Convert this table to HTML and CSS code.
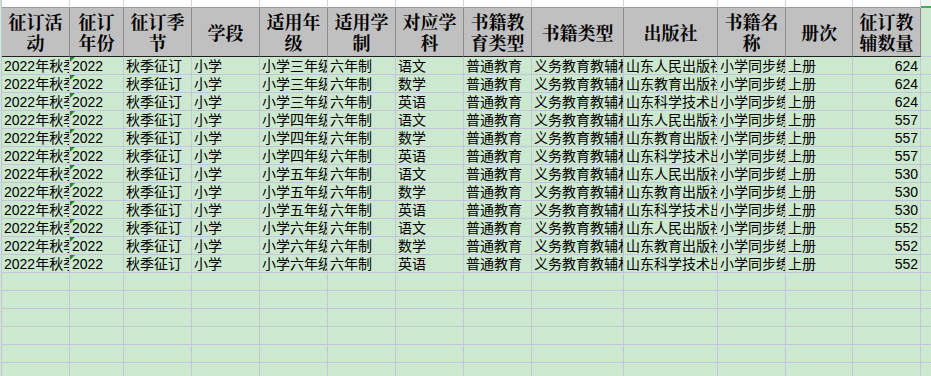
FILE: index.html
```html
<!DOCTYPE html>
<html lang="zh-CN">
<head>
<meta charset="utf-8">
<title>征订表</title>
<link rel="stylesheet" href="styles.css">
</head>
<body>
<div class="sheet">
  <div class="col-head"><span>A</span></div><div class="col-head"><span>B</span></div><div class="col-head"><span>C</span></div><div class="col-head"><span>D</span></div><div class="col-head"><span>E</span></div><div class="col-head"><span>F</span></div><div class="col-head"><span>G</span></div><div class="col-head"><span>H</span></div><div class="col-head"><span>I</span></div><div class="col-head"><span>J</span></div><div class="col-head"><span>K</span></div><div class="col-head"><span>L</span></div><div class="col-head"><span>M</span></div><div class="col-head col-sel"><span>N</span></div>

  <div class="th">征订活动</div><div class="th">征订年份</div><div class="th">征订季节</div><div class="th">学段</div><div class="th">适用年级</div><div class="th">适用学制</div><div class="th">对应学科</div><div class="th">书籍教育类型</div><div class="th">书籍类型</div><div class="th">出版社</div><div class="th">书籍名称</div><div class="th">册次</div><div class="th">征订教辅数量</div><div class="td blank"></div>

  <div class="td">2022年秋季征订</div><div class="td txtnum">2022</div><div class="td">秋季征订</div><div class="td">小学</div><div class="td">小学三年级</div><div class="td">六年制</div><div class="td">语文</div><div class="td">普通教育</div><div class="td">义务教育教辅材料</div><div class="td">山东人民出版社</div><div class="td">小学同步练习册</div><div class="td">上册</div><div class="td num">624</div><div class="td blank"></div>
  <div class="td">2022年秋季征订</div><div class="td txtnum">2022</div><div class="td">秋季征订</div><div class="td">小学</div><div class="td">小学三年级</div><div class="td">六年制</div><div class="td">数学</div><div class="td">普通教育</div><div class="td">义务教育教辅材料</div><div class="td">山东教育出版社</div><div class="td">小学同步练习册</div><div class="td">上册</div><div class="td num">624</div><div class="td blank"></div>
  <div class="td">2022年秋季征订</div><div class="td txtnum">2022</div><div class="td">秋季征订</div><div class="td">小学</div><div class="td">小学三年级</div><div class="td">六年制</div><div class="td">英语</div><div class="td">普通教育</div><div class="td">义务教育教辅材料</div><div class="td">山东科学技术出版社</div><div class="td">小学同步练习册</div><div class="td">上册</div><div class="td num">624</div><div class="td blank"></div>
  <div class="td">2022年秋季征订</div><div class="td txtnum">2022</div><div class="td">秋季征订</div><div class="td">小学</div><div class="td">小学四年级</div><div class="td">六年制</div><div class="td">语文</div><div class="td">普通教育</div><div class="td">义务教育教辅材料</div><div class="td">山东人民出版社</div><div class="td">小学同步练习册</div><div class="td">上册</div><div class="td num">557</div><div class="td blank"></div>
  <div class="td">2022年秋季征订</div><div class="td txtnum">2022</div><div class="td">秋季征订</div><div class="td">小学</div><div class="td">小学四年级</div><div class="td">六年制</div><div class="td">数学</div><div class="td">普通教育</div><div class="td">义务教育教辅材料</div><div class="td">山东教育出版社</div><div class="td">小学同步练习册</div><div class="td">上册</div><div class="td num">557</div><div class="td blank"></div>
  <div class="td">2022年秋季征订</div><div class="td txtnum">2022</div><div class="td">秋季征订</div><div class="td">小学</div><div class="td">小学四年级</div><div class="td">六年制</div><div class="td">英语</div><div class="td">普通教育</div><div class="td">义务教育教辅材料</div><div class="td">山东科学技术出版社</div><div class="td">小学同步练习册</div><div class="td">上册</div><div class="td num">557</div><div class="td blank"></div>
  <div class="td">2022年秋季征订</div><div class="td txtnum">2022</div><div class="td">秋季征订</div><div class="td">小学</div><div class="td">小学五年级</div><div class="td">六年制</div><div class="td">语文</div><div class="td">普通教育</div><div class="td">义务教育教辅材料</div><div class="td">山东人民出版社</div><div class="td">小学同步练习册</div><div class="td">上册</div><div class="td num">530</div><div class="td blank"></div>
  <div class="td">2022年秋季征订</div><div class="td txtnum">2022</div><div class="td">秋季征订</div><div class="td">小学</div><div class="td">小学五年级</div><div class="td">六年制</div><div class="td">数学</div><div class="td">普通教育</div><div class="td">义务教育教辅材料</div><div class="td">山东教育出版社</div><div class="td">小学同步练习册</div><div class="td">上册</div><div class="td num">530</div><div class="td blank"></div>
  <div class="td">2022年秋季征订</div><div class="td txtnum">2022</div><div class="td">秋季征订</div><div class="td">小学</div><div class="td">小学五年级</div><div class="td">六年制</div><div class="td">英语</div><div class="td">普通教育</div><div class="td">义务教育教辅材料</div><div class="td">山东科学技术出版社</div><div class="td">小学同步练习册</div><div class="td">上册</div><div class="td num">530</div><div class="td blank"></div>
  <div class="td">2022年秋季征订</div><div class="td txtnum">2022</div><div class="td">秋季征订</div><div class="td">小学</div><div class="td">小学六年级</div><div class="td">六年制</div><div class="td">语文</div><div class="td">普通教育</div><div class="td">义务教育教辅材料</div><div class="td">山东人民出版社</div><div class="td">小学同步练习册</div><div class="td">上册</div><div class="td num">552</div><div class="td blank"></div>
  <div class="td">2022年秋季征订</div><div class="td txtnum">2022</div><div class="td">秋季征订</div><div class="td">小学</div><div class="td">小学六年级</div><div class="td">六年制</div><div class="td">数学</div><div class="td">普通教育</div><div class="td">义务教育教辅材料</div><div class="td">山东教育出版社</div><div class="td">小学同步练习册</div><div class="td">上册</div><div class="td num">552</div><div class="td blank"></div>
  <div class="td">2022年秋季征订</div><div class="td txtnum">2022</div><div class="td">秋季征订</div><div class="td">小学</div><div class="td">小学六年级</div><div class="td">六年制</div><div class="td">英语</div><div class="td">普通教育</div><div class="td">义务教育教辅材料</div><div class="td">山东科学技术出版社</div><div class="td">小学同步练习册</div><div class="td">上册</div><div class="td num">552</div><div class="td blank"></div>

  <div class="td"></div><div class="td"></div><div class="td"></div><div class="td"></div><div class="td"></div><div class="td"></div><div class="td"></div><div class="td"></div><div class="td"></div><div class="td"></div><div class="td"></div><div class="td"></div><div class="td"></div><div class="td blank"></div>
  <div class="td"></div><div class="td"></div><div class="td"></div><div class="td"></div><div class="td"></div><div class="td"></div><div class="td"></div><div class="td"></div><div class="td"></div><div class="td"></div><div class="td"></div><div class="td"></div><div class="td"></div><div class="td blank"></div>
  <div class="td"></div><div class="td"></div><div class="td"></div><div class="td"></div><div class="td"></div><div class="td"></div><div class="td"></div><div class="td"></div><div class="td"></div><div class="td"></div><div class="td"></div><div class="td"></div><div class="td"></div><div class="td blank"></div>
  <div class="td"></div><div class="td"></div><div class="td"></div><div class="td"></div><div class="td"></div><div class="td"></div><div class="td"></div><div class="td"></div><div class="td"></div><div class="td"></div><div class="td"></div><div class="td"></div><div class="td"></div><div class="td blank"></div>
  <div class="td"></div><div class="td"></div><div class="td"></div><div class="td"></div><div class="td"></div><div class="td"></div><div class="td"></div><div class="td"></div><div class="td"></div><div class="td"></div><div class="td"></div><div class="td"></div><div class="td"></div><div class="td blank"></div>
  <div class="td"></div><div class="td"></div><div class="td"></div><div class="td"></div><div class="td"></div><div class="td"></div><div class="td"></div><div class="td"></div><div class="td"></div><div class="td"></div><div class="td"></div><div class="td"></div><div class="td"></div><div class="td blank"></div>
</div>
</body>
</html>
```

FILE: styles.css
```css
* { box-sizing: border-box; }

html, body {
  margin: 0;
  padding: 0;
  width: 931px;
  height: 376px;
  overflow: hidden;
  background: #cce8cf;
}

.sheet {
  margin-left: 1px;
  border-left: 1px solid #c4c4dc;
  display: grid;
  grid-template-columns: 68px 54px 68px 68px 68px 68px 68px 68px 92px 94px 68px 67px 68px 1fr;
  grid-template-rows: 8px 49px;
  grid-auto-rows: 18px;
  font-family: "Liberation Sans", "Noto Sans CJK SC", sans-serif;
  color: #000;
}

.col-head {
  background: #ffffff;
  border-right: 1px solid #d4d4d4;
  border-bottom: 1px solid #9a9a9a;
  overflow: hidden;
  text-align: center;
  font-size: 12px;
  line-height: 12px;
  color: #222;
}

.col-head span {
  display: block;
  margin-top: -10px;
}

.col-sel {
  background: #eef6ef;
  border-bottom: 2px solid #3fae56;
  border-right: none;
}

.th {
  background: #c0c0c0;
  border-right: 1px solid #8c8c8c;
  border-bottom: 1px solid #202020;
  font-family: "Noto Serif CJK SC", "Noto Sans CJK SC", sans-serif;
  font-weight: 700;
  font-size: 18px;
  line-height: 21px;
  text-align: center;
  display: flex;
  align-items: center;
  justify-content: center;
  padding: 0 4px;
  overflow: hidden;
}

.td {
  position: relative;
  border-right: 1px solid #c4c4dc;
  border-bottom: 1px solid #c4c4dc;
  font-size: 14px;
  line-height: 17px;
  padding: 1px 0 0 2px;
  white-space: nowrap;
  overflow: hidden;
}

.td.blank {
  border-right: none;
}

.num {
  text-align: right;
  padding-right: 2px;
}

.txtnum::before {
  content: "";
  position: absolute;
  left: 0;
  top: 0;
  width: 0;
  height: 0;
  border-top: 5px solid #1f8a1f;
  border-right: 5px solid transparent;
}
```
